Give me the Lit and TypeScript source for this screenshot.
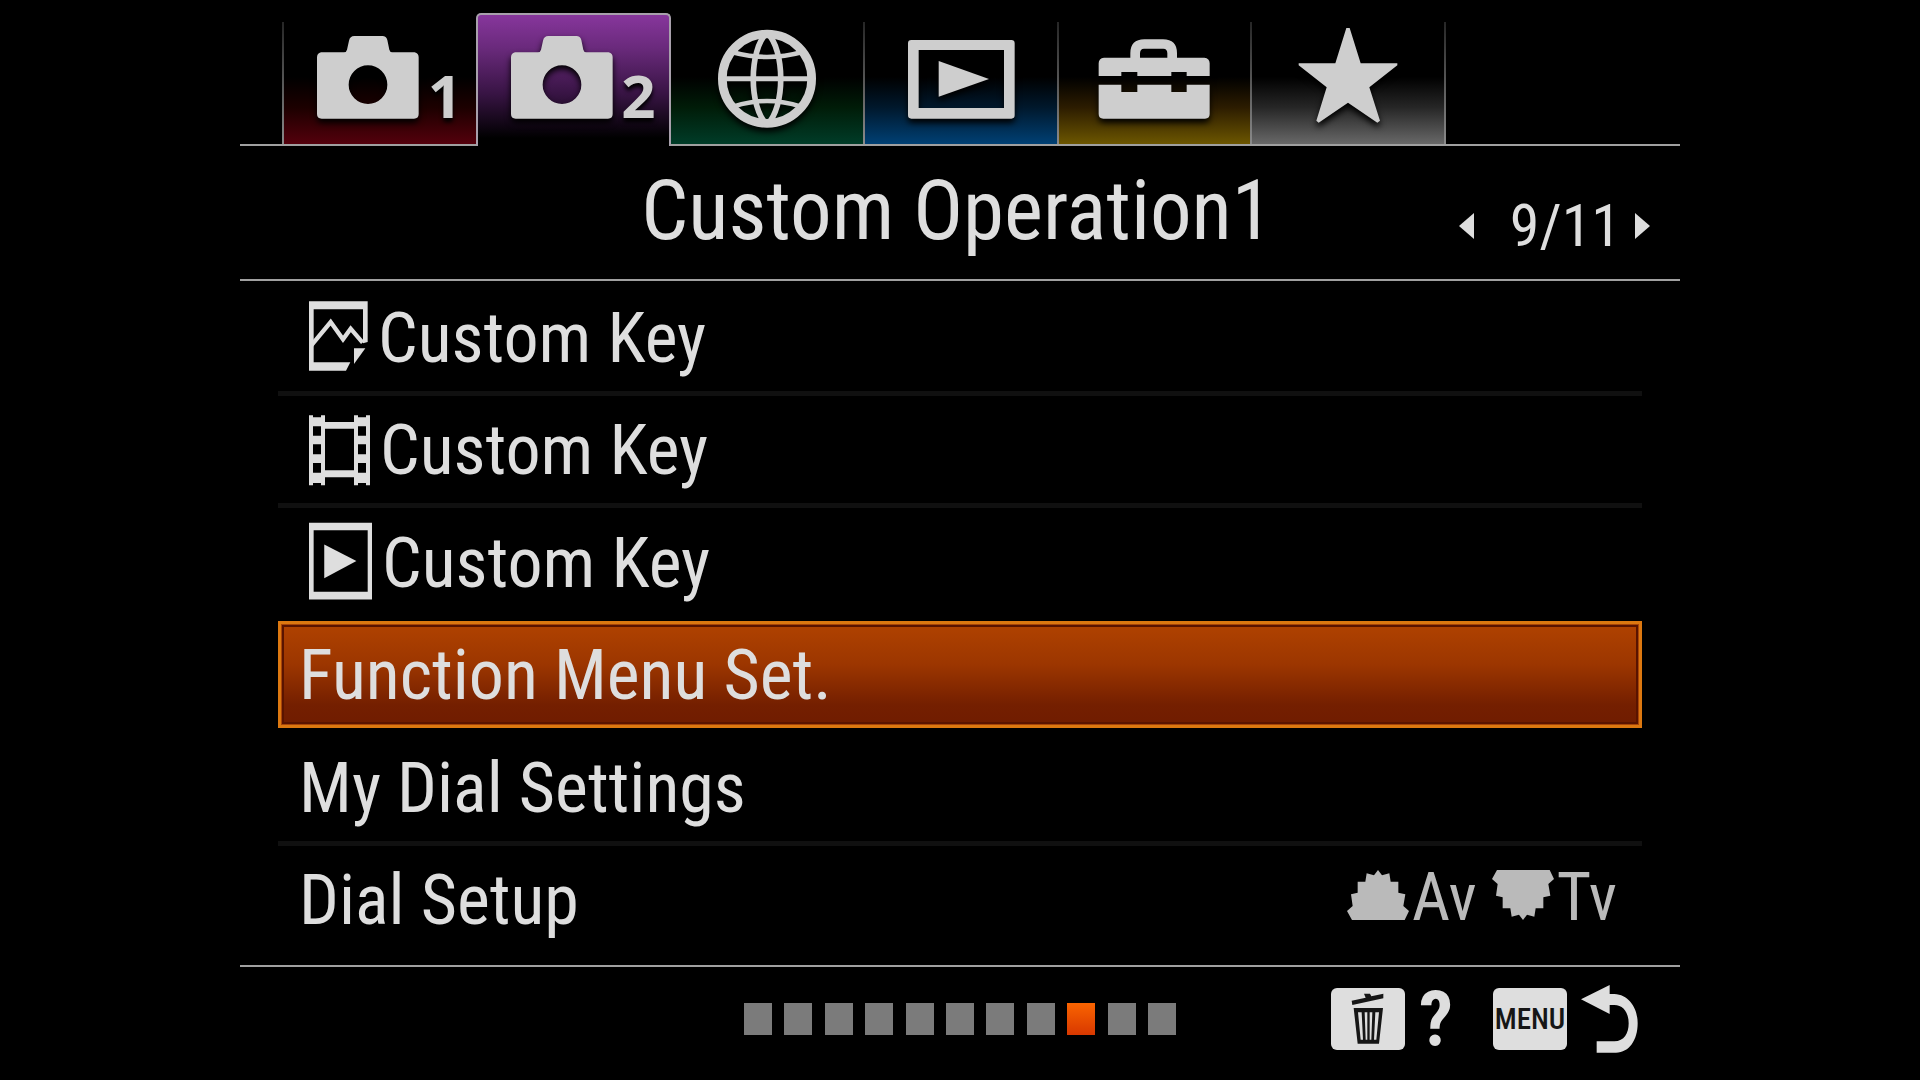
import { LitElement, html, css, nothing, type TemplateResult } from "lit";
import { customElement, state } from "lit/decorators.js";
import { classMap } from "lit/directives/class-map.js";

interface MenuTab {
  name: string;
  tone: string;
  icon: TemplateResult;
  num?: string;
}

interface MenuItem {
  label: string;
  icon?: TemplateResult;
  dials?: boolean;
}

const camera = html`<svg class="tab-icon" width="102" height="104" viewBox="264 78 306 312" aria-hidden="true">
  <path fill-rule="evenodd" d="M276 157H345Q352 157 354 149L360 122Q363 108 376 108H460Q472 108 475 120L481 149Q483 157 490 157H557Q569 160 569 172V342Q569 356 555 356H278Q264 356 264 342V172Q264 160 276 157ZM417 196A58 58 0 1 0 417 312A58 58 0 1 0 417 196Z"/>
</svg>`;

const globe = html`<svg class="tab-icon" width="112" height="104" viewBox="124 78 336 312" aria-hidden="true">
  <g class="line">
    <circle cx="292" cy="236" r="134" stroke-width="26"/>
    <path stroke-width="15" d="M158 236H426"/>
    <path stroke-width="17" d="M292 98C237 150 237 322 292 374M292 98C347 150 347 322 292 374"/>
    <path stroke-width="14" d="M186 156Q292 186 398 156M190 320Q292 286 394 320"/>
  </g>
</svg>`;

const playback = html`<svg class="tab-icon" width="112" height="104" viewBox="705 78 336 312" aria-hidden="true">
  <path fill-rule="evenodd" d="M724 120H1024Q1034 120 1034 130V346Q1034 356 1024 356H724Q714 356 714 346V130Q714 120 724 120ZM746 150V324H1002V150Z"/>
  <path d="M806 183L957 237L806 290Z"/>
</svg>`;

const toolbox = html`<svg class="tab-icon" width="112" height="104" viewBox="146 78 336 312" aria-hidden="true">
  <path d="M243 174V160Q243 118 285 118H341Q383 118 383 160V174H354V160Q354 146 342 146H284Q272 146 272 160V174Z"/>
  <path d="M164 173H465Q481 175 481 190V228H412V216H366V228H264V216H216V228H148V190Q148 175 164 173Z"/>
  <path d="M148 254H216V276H264V254H366V276H412V254H481V342Q481 356 467 356H162Q148 356 148 342Z"/>
</svg>`;

const star = html`<svg class="tab-icon" width="112" height="104" viewBox="728 78 336 312" aria-hidden="true">
  <path d="M891 84H901L934 190H1044V196L960 262L992 362L984 368L896 308L808 368L801 362L832 262L748 196V190H858Z"/>
</svg>`;

const photoMark = html`<svg class="mark" width="59" height="80" viewBox="207 51 177 240" aria-hidden="true">
  <path d="M207 64H383V186L369 190V88H221V247H331L318 272H207Z"/>
  <path fill="none" stroke="currentColor" stroke-width="13" d="M214 196L272 126L309 178L332 146L368 188"/>
  <path d="M342 205H376L342 252Z"/>
</svg>`;

const filmMark = html`<svg class="mark" width="61" height="80" viewBox="207 388 183 240" aria-hidden="true">
  <path fill-rule="evenodd" d="M207 407H219V413H243V407H255V427H342V407H354V413H378V407H390V617H378V610H354V617H342V593H255V617H243V610H219V617H207ZM255 447V572H342V447ZM219 440V468H243V440ZM219 494V524H243V494ZM219 550V579H243V550ZM354 440V468H378V440ZM354 494V524H378V494ZM354 550V579H378V550Z"/>
</svg>`;

const playMark = html`<svg class="mark" width="63" height="80" viewBox="207 726 190 240" aria-hidden="true">
  <path fill-rule="evenodd" d="M207 728H397V959H207ZM221 750V936H384V750Z"/>
  <path d="M253 793L350 843L253 895Z"/>
</svg>`;

const gearPath = "M170 242L155 215L172 200L167 165L187 160V127H210L214 102L236 108L248 92L260 108L282 102L286 127H309V160L330 165L324 200L341 215L328 242Z";

const frontDial = html`<svg width="62" height="50" viewBox="155 92 186 150" role="img" aria-label="Front dial">
  <path d=${gearPath}/>
</svg>`;

const rearDial = html`<svg width="62" height="50" viewBox="155 92 186 150" role="img" aria-label="Rear dial">
  <path transform="translate(0 334) scale(1 -1)" d=${gearPath}/>
</svg>`;

const trash = html`<svg width="34" height="52" viewBox="153 460 102 156" aria-hidden="true">
  <path d="M155 483L197 474L192 462H210L214 470L250 462V476L157 496Z"/>
  <path fill-rule="evenodd" d="M161 505H249L237 612H173ZM174 518L182 600H189L185 518ZM194 518L197 600H202V518ZM209 518V600H214L217 518ZM226 518L222 600H229L237 518Z"/>
</svg>`;

const back = html`<svg width="57" height="68" viewBox="845 435 171 204" aria-hidden="true">
  <path d="M845 478L931 435V462H945C990 464 1015 505 1015 550C1015 600 990 638 950 638H892V604H945C975 604 988 580 988 550C988 518 972 495 945 495H931V522Z"/>
</svg>`;

const TABS: MenuTab[] = [
  { name: "Camera settings 1", tone: "red", icon: camera, num: "1" },
  { name: "Camera settings 2", tone: "purple", icon: camera, num: "2" },
  { name: "Network", tone: "green", icon: globe },
  { name: "Playback", tone: "blue", icon: playback },
  { name: "Setup", tone: "yellow", icon: toolbox },
  { name: "My Menu", tone: "gray", icon: star },
];

const ITEMS: MenuItem[] = [
  { label: "Custom Key", icon: photoMark },
  { label: "Custom Key", icon: filmMark },
  { label: "Custom Key", icon: playMark },
  { label: "Function Menu Set." },
  { label: "My Dial Settings" },
  { label: "Dial Setup", dials: true },
];

const PAGE = 9;
const PAGES = 11;

@customElement("app-root")
export class AppRoot extends LitElement {
  static styles = css`
    :host {
      display: block;
      background: #000;
      color: #dedede;
      font-family: "Roboto Condensed", "Liberation Sans", sans-serif;
    }
    * { box-sizing: border-box; }
    button {
      margin: 0;
      padding: 0;
      border: 0;
      background: none;
      color: inherit;
      font: inherit;
      cursor: pointer;
    }
    svg { display: block; flex: none; fill: currentColor; }
    .screen {
      display: grid;
      grid-template-rows: auto auto 1fr auto;
      min-height: 100vh;
      margin: 0 12.5%;
    }

    .tabs {
      display: grid;
      grid-template-columns: 42px repeat(6, 1fr) 236px;
      align-items: end;
      padding-top: 13px;
    }
    .tabs::before, .tabs::after {
      content: "";
      height: 2px;
      background: #a0a0a0;
    }
    .tab {
      display: flex;
      justify-content: center;
      align-items: flex-end;
      height: 124px;
      margin-right: -2px;
      padding-bottom: 14px;
      border-bottom: 2px solid #a0a0a0;
      color: #cecece;
      background:
        linear-gradient(#262626, #8a8a8a) left / 2px 100% no-repeat,
        linear-gradient(#262626, #8a8a8a) right / 2px 100% no-repeat,
        linear-gradient(#000 45%, var(--mid) 70%, var(--tone) 100%);
    }
    .tab.numbered { padding-left: 20px; gap: 8px; }
    .red { --mid: #1c0000; --tone: #54000c; }
    .green { --mid: #001c08; --tone: #003c28; }
    .blue { --mid: #00182c; --tone: #004074; }
    .yellow { --mid: #2c1c00; --tone: #6c5600; }
    .gray { --mid: #262626; --tone: #686868; }
    .tab.active {
      z-index: 1;
      height: 133px;
      padding-bottom: 16px;
      border: 2px solid #a8a0ac;
      border-bottom: 0;
      border-radius: 5px 5px 0 0;
      background: linear-gradient(#87369c, #6a2a7c 25%, #381444 60%, #000 94%);
    }
    .tab-icon { filter: drop-shadow(0 4px 3px #000); }
    .line { fill: none; stroke: currentColor; }
    .num {
      width: 35px;
      margin-bottom: 5px;
      font: 700 60px/60px "Noto Sans", sans-serif;
      text-shadow: 0 4px 4px #000;
    }

    .heading {
      display: grid;
      grid-template-columns: 1fr auto 1fr;
      align-items: end;
      height: 135px;
      border-bottom: 2px solid #a0a0a0;
    }
    .heading h1 {
      grid-column: 2;
      margin: 0;
      padding: 0 6px 20px 0;
      font-size: 83px;
      font-weight: 400;
      line-height: 96px;
    }
    .pager {
      display: flex;
      justify-content: flex-end;
      align-items: center;
      padding: 0 30px 21px 0;
      font-size: 60px;
      line-height: 64px;
    }
    .pager .count { padding: 0 14px 0 36px; }

    .items {
      display: flex;
      flex-direction: column;
      margin: 0;
      padding: 2px 38px 7px;
      list-style: none;
    }
    .items li {
      display: flex;
      flex: 1;
      border-bottom: 5px solid #101010;
    }
    .items li.bare { border-color: transparent; }
    .item {
      display: flex;
      flex: 1;
      align-items: center;
      min-height: 107px;
      padding: 0 22px 0 18px;
      border: 3px solid transparent;
      font-size: 70px;
      line-height: 84px;
      text-align: left;
      white-space: nowrap;
    }
    .item.selected {
      border-color: #dc7810;
      background: linear-gradient(#b04200, #9c3600 40%, #741f00 80%, #701c00);
      box-shadow: inset 0 0 0 1px #a84408, inset 0 0 0 3px #5a1400;
    }
    .mark { margin: 0 10px; }
    .label { flex: 1; padding-top: 2px; }
    .dials {
      display: flex;
      align-items: center;
      gap: 3px;
      padding-bottom: 8px;
      color: #bababa;
      font-size: 66px;
      line-height: 76px;
    }
    .dials span { padding-top: 6px; }
    .dials svg:nth-of-type(2) { margin-left: 12px; }

    .foot {
      display: grid;
      grid-template-columns: 1fr 30% 1fr;
      align-items: center;
      height: 115px;
      padding-bottom: 10px;
      border-top: 2px solid #a0a0a0;
    }
    .dots {
      grid-column: 2;
      display: flex;
      justify-content: space-between;
    }
    .dot { width: 28px; height: 32px; background: #7b7b7b; }
    .dot.current { background: linear-gradient(#fa6400, #d83800); }
    .keys {
      display: flex;
      justify-content: flex-end;
      gap: 40px;
      padding-right: 42px;
    }
    .key { display: flex; align-items: center; gap: 14px; }
    .cap {
      display: flex;
      justify-content: center;
      align-items: center;
      width: 74px;
      height: 62px;
      border-radius: 6px;
      background: #dedede;
      color: #161616;
      font-size: 29px;
      font-weight: 500;
    }
    .help { font-size: 76px; font-weight: 700; line-height: 62px; }
  `;

  @state() private tab = 1;
  @state() private selected = 3;

  private renderItem(item: MenuItem, i: number) {
    const bare = i === this.selected || i === this.selected - 1 || i === ITEMS.length - 1;
    return html`<li class=${classMap({ bare })}>
      <button class=${classMap({ item: true, selected: i === this.selected })} @click=${() => (this.selected = i)}>
        ${item.icon ?? nothing}<span class="label">${item.label}</span>
        ${item.dials
          ? html`<span class="dials">${frontDial}<span>Av</span>${rearDial}<span>Tv</span></span>`
          : nothing}
      </button>
    </li>`;
  }

  render() {
    return html`<main class="screen">
      <nav class="tabs" aria-label="Menu groups">
        ${TABS.map((t, i) => html`<button
          class=${classMap({ tab: true, [t.tone]: true, numbered: !!t.num, active: i === this.tab })}
          aria-label=${t.name}
          @click=${() => (this.tab = i)}
        >${t.icon}${t.num ? html`<span class="num">${t.num}</span>` : nothing}</button>`)}
      </nav>
      <header class="heading">
        <h1>Custom Operation1</h1>
        <div class="pager">
          <button aria-label="Previous page"><svg width="15" height="26" viewBox="0 0 15 26"><path d="M15 0V26L0 13Z"/></svg></button>
          <span class="count">${PAGE}/${PAGES}</span>
          <button aria-label="Next page"><svg width="15" height="26" viewBox="0 0 15 26"><path d="M0 0L15 13L0 26Z"/></svg></button>
        </div>
      </header>
      <ul class="items">${ITEMS.map((item, i) => this.renderItem(item, i))}</ul>
      <footer class="foot">
        <div class="dots" role="img" aria-label="Page ${PAGE} of ${PAGES}">
          ${Array.from({ length: PAGES }, (_, i) => html`<span class=${classMap({ dot: true, current: i === PAGE - 1 })}></span>`)}
        </div>
        <div class="keys">
          <button class="key" aria-label="Help"><span class="cap">${trash}</span><span class="help">?</span></button>
          <button class="key" aria-label="Back"><span class="cap">MENU</span>${back}</button>
        </div>
      </footer>
    </main>`;
  }
}
